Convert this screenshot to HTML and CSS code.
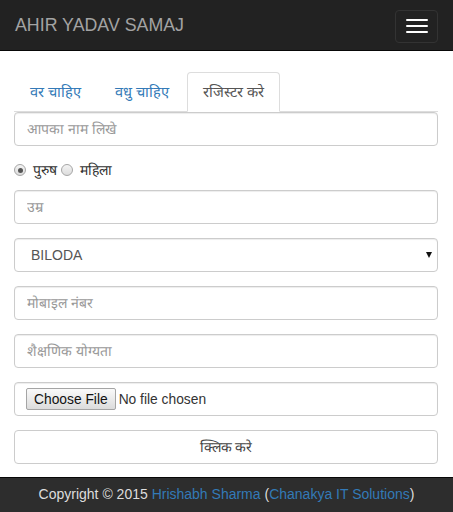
FILE: index.html
```html
<!DOCTYPE html>
<html lang="hi">
<head>
<meta charset="utf-8">
<title>AHIR YADAV SAMAJ</title>
<link rel="stylesheet" href="styles.css">
</head>
<body>
<nav class="navbar">
  <a class="brand" href="#">AHIR YADAV SAMAJ</a>
  <button class="toggle" type="button" aria-label="menu">
    <span class="bar"></span><span class="bar"></span><span class="bar"></span>
  </button>
</nav>
<main class="container">
  <ul class="tabs">
    <li class="tab"><a href="#">वर चाहिए</a></li>
    <li class="tab"><a href="#">वधु चाहिए</a></li>
    <li class="tab active"><a href="#">रजिस्टर करे</a></li>
  </ul>
  <form class="form">
    <input class="control first" type="text" placeholder="आपका नाम लिखे">
    <div class="radios">
      <label class="radio"><input type="radio" name="g" checked><span>पुरुष</span></label>
      <label class="radio"><input type="radio" name="g"><span>महिला</span></label>
    </div>
    <input class="control" type="text" placeholder="उम्र">
    <div class="select-wrap">
      <select class="control select"><option>BILODA</option></select>
    </div>
    <input class="control" type="text" placeholder="मोबाइल नंबर">
    <input class="control" type="text" placeholder="शैक्षणिक योग्यता">
    <div class="control file-box"><input class="file" type="file"></div>
    <button class="control submit" type="button">क्लिक करे</button>
  </form>
</main>
<footer class="footer">
  Copyright © 2015 <a href="#">Hrishabh Sharma</a> (<a href="#">Chanakya IT Solutions</a>)
</footer>
</body>
</html>
```
FILE: styles.css
```css
* { box-sizing: border-box; }
html, body { margin: 0; padding: 0; }
body {
  font-family: "Liberation Sans", Arial, sans-serif;
  font-size: 14px;
  line-height: 20px;
  color: #333;
  background: #fff;
  width: 453px;
  height: 512px;
  overflow: hidden;
}
a { text-decoration: none; }

.navbar {
  height: 51px;
  background: #222;
  border-bottom: 1px solid #080808;
  display: flex;
  align-items: center;
  justify-content: space-between;
  padding: 0 15px;
}
.brand {
  color: #a3a3a3;
  font-size: 17.8px;
  line-height: 20px;
}
.toggle {
  width: 43px;
  height: 33px;
  margin-top: 2px;
  background: transparent;
  border: 1px solid #333;
  border-radius: 4px;
  display: flex;
  flex-direction: column;
  align-items: center;
  justify-content: center;
  gap: 4px;
  padding: 0;
}
.bar {
  display: block;
  width: 22px;
  height: 2px;
  background: #fff;
  border-radius: 1px;
}

.container { padding: 21px 15px 0 14px; }

.tabs {
  list-style: none;
  margin: 0;
  padding: 0;
  display: flex;
  border-bottom: 1px solid #ddd;
}
.tab { margin-bottom: -1px; margin-right: 2px; }
.tab a {
  display: block;
  padding: 10px 15px;
  font-size: 14.6px;
  line-height: 18px;
  border: 1px solid transparent;
  border-radius: 4px 4px 0 0;
  color: #337ab7;
}
.tab.active a {
  color: #555;
  background: #fff;
  border-color: #ddd #ddd transparent;
}

.form { display: flex; flex-direction: column; }
.control {
  display: block;
  width: 100%;
  height: 34px;
  padding: 6px 12px;
  font-family: inherit;
  font-size: 14px;
  line-height: 20px;
  color: #555;
  background: #fff;
  border: 1px solid #ccc;
  border-radius: 4px;
  box-shadow: inset 0 1px 1px rgba(0,0,0,.075);
  margin: 0 0 14px 0;
}
.control::placeholder { color: #999; }

.radios {
  display: flex;
  align-items: center;
  height: 20px;
  margin-bottom: 10px;
  color: #333;
}
.radio { display: flex; align-items: center; margin-right: 4px; }
.radio input {
  appearance: none;
  -webkit-appearance: none;
  width: 12px;
  height: 12px;
  margin: 0 7px 0 0;
  border: 1px solid #a6a6a6;
  border-radius: 50%;
  background: linear-gradient(#f4f4f4, #dcdcdc);
  display: grid;
  place-items: center;
}
.radio input:checked::after {
  content: "";
  width: 5px;
  height: 5px;
  border-radius: 50%;
  background: #555;
}

.select-wrap { position: relative; }
.select {
  appearance: none;
  -webkit-appearance: none;
  padding-left: 16px;
}
.select-wrap::after {
  content: "";
  position: absolute;
  right: 6px;
  top: 14px;
  border-left: 3.5px solid transparent;
  border-right: 3.5px solid transparent;
  border-top: 6px solid #111;
}

.file-box { padding: 5px 11px; }
.file {
  font-family: "Liberation Sans", Arial, sans-serif;
  font-size: 13.8px;
  color: #333;
  width: 100%;
}
.file::file-selector-button {
  font-family: "Liberation Sans", Arial, sans-serif;
  font-size: 13.8px;
  color: #111;
  height: 22px;
  padding: 0 7px;
  margin-right: 3px;
  border: 1px solid #a5a5a5;
  border-radius: 2px;
  background: linear-gradient(#fafafa, #dcdcdc);
}

.submit {
  color: #444;
  text-align: center;
  box-shadow: none;
  margin-bottom: 13px;
}

.footer {
  height: 35px;
  background: #2d2d2d;
  border-top: 1px solid #080808;
  color: #ddd;
  text-align: center;
  line-height: 20px;
  padding-top: 6px;
}
.footer a { color: #337ab7; }
```
